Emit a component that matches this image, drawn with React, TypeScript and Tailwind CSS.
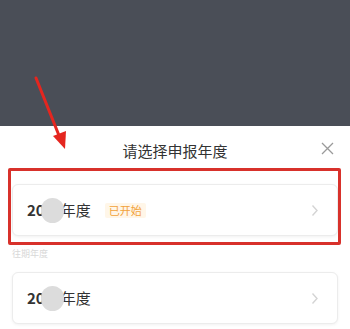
import React from 'react';

const YearCard = ({ started }: { started?: boolean }) => (
  <div className="flex h-[52px] items-center rounded-[6px] border border-[#ececec] bg-white pl-[14px] pr-[18px] shadow-[0_1px_3px_rgba(0,0,0,0.06)]">
    <span className="text-[15px] font-semibold text-[#333]">20</span>
    <span className="-ml-[4px] -mr-[3px] inline-block h-[25px] w-[23px] rounded-full bg-[#dcdcdc] blur-[0.5px]" />
    <span className="text-[15px] text-[#333]">年度</span>
    {started && (
      <span className="ml-[14px] rounded-[2px] bg-[#fff6e8] px-[4px] text-[11px] leading-[15px] text-[#f2a23a]">已开始</span>
    )}
    <svg className="ml-auto" width="8" height="13" viewBox="0 0 8 13" fill="none">
      <path d="M1.5 1.5 L6 6.5 L1.5 11.5" stroke="#d4d4d4" strokeWidth="1.4" />
    </svg>
  </div>
);

export default function App() {
  return (
    <div className="relative h-[329px] w-[350px] overflow-hidden bg-white" style={{ fontFamily: '"Noto Sans CJK SC", "Noto Sans", sans-serif' }}>
      <div className="h-[126px] bg-[#4a4e57]" />
      <div className="px-[12px]">
        <div className="relative flex h-[50px] items-center justify-center">
          <span className="text-[15px] text-[#333]">请选择申报年度</span>
          <svg className="absolute right-[4px] top-[16px]" width="13" height="13" viewBox="0 0 13 13">
            <path d="M1 1 L12 12 M12 1 L1 12" stroke="#9a9a9a" strokeWidth="1.3" />
          </svg>
        </div>
        <div className="mt-[8px]">
          <YearCard started />
        </div>
        <div className="mt-[12px] text-[9px] leading-[12px] text-[#d8d8d8]">往期年度</div>
        <div className="mt-[12px]">
          <YearCard />
        </div>
      </div>

      {/* annotation overlay */}
      <div className="absolute left-[8px] top-[168px] h-[77px] w-[333px] rounded-[2px] border-[3px] border-[#d8312b]" />
      <svg className="absolute left-0 top-0" width="350" height="329" viewBox="0 0 350 329">
        <path d="M36 78 L60 138" stroke="#e5261f" strokeWidth="3" strokeLinecap="round" />
        <path d="M53 136 L65 149 L66 131 Z" fill="#e5261f" />
      </svg>
    </div>
  );
}
